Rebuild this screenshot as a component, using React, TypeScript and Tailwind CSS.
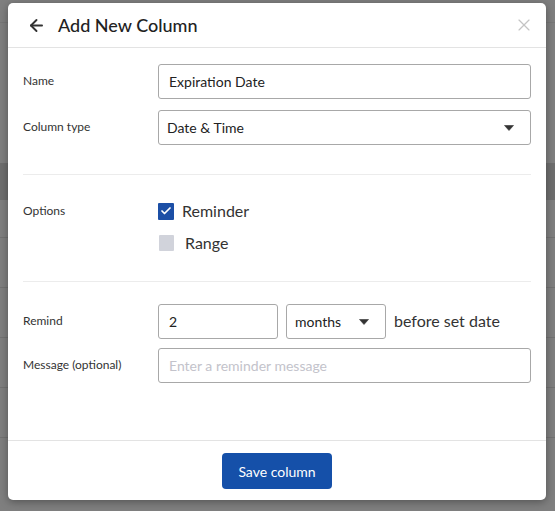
import { ArrowLeft, X, Check } from 'lucide-react';

const font = { fontFamily: 'Lato, "Open Sans", sans-serif' };

function Caret() {
  return (
    <svg width="10" height="6" viewBox="0 0 10 6" className="shrink-0">
      <path d="M0.5 0.5h9L5 5.5z" fill="#333" stroke="#333" strokeLinejoin="round" strokeWidth="0.6" />
    </svg>
  );
}

function Row({ label, children }: { label: string; children: React.ReactNode }) {
  return (
    <div className="flex items-center">
      <div className="w-[135px] shrink-0 pb-[2px] text-[12px] text-[#333]">{label}</div>
      {children}
    </div>
  );
}

export default function App() {
  return (
    <div className="relative h-[511px] w-[555px] overflow-hidden bg-[#7f7f7f]" style={font}>
      {/* dimmed page behind the dialog */}
      <div className="flex flex-col">
        <div className="h-[23px] border-b border-[#777]" />
        <div className="h-[140px]" />
        <div className="h-[37px] bg-[#6e6e6e]" />
        <div className="h-[38px] border-b border-[#727272]" />
        <div className="h-[50px] border-b border-[#727272]" />
        <div className="h-[50px] border-b border-[#727272]" />
        <div className="h-[50px] border-b border-[#727272]" />
        <div className="h-[50px] border-b border-[#727272]" />
      </div>

      <div className="absolute left-[8px] top-[3px] flex h-[497px] w-[538px] flex-col rounded-[5px] bg-white shadow-[0_2px_8px_rgba(0,0,0,0.35)]">
        <div className="flex h-[45px] shrink-0 items-center border-b border-[#e3e3e3] pl-[19px] pr-[12px]">
          <ArrowLeft size={19} strokeWidth={2.4} color="#333" />
          <h1 className="ml-[12px] text-[18px] font-medium text-[#222]">Add New Column</h1>
          <X size={20} strokeWidth={1.4} color="#c4c4c4" className="ml-auto" />
        </div>

        <div className="flex flex-1 flex-col px-[15px] pt-[16px]">
          <div className="flex flex-col gap-[11px]">
            <Row label="Name">
              <div className="flex h-[35px] flex-1 items-center rounded-[3px] border border-[#a8a8a8] px-[10px] text-[14px] text-[#222]">
                Expiration Date
              </div>
            </Row>
            <Row label="Column type">
              <div className="flex h-[35px] flex-1 items-center justify-between rounded-[3px] border border-[#a8a8a8] pl-[8px] pr-[16px] text-[14px] text-[#222]">
                <span>Date &amp; Time</span>
                <Caret />
              </div>
            </Row>
          </div>

          <div className="mt-[29px] h-px w-[508px] bg-[#ececec]" />

          <div className="flex pt-[26px] pb-[28px]">
            <div className="flex h-[20px] w-[135px] shrink-0 items-center text-[12px] text-[#333]">Options</div>
            <div className="flex flex-col gap-[12px]">
              <div className="flex h-[20px] items-center">
                <span className="flex h-[17px] w-[16px] items-center justify-center rounded-[1px] bg-[#1c4fa6]">
                  <Check size={12} strokeWidth={3.5} color="#fff" />
                </span>
                <span className="ml-[8px] text-[16px] text-[#333]">Reminder</span>
              </div>
              <div className="flex h-[20px] items-center pl-[1px]">
                <span className="h-[16px] w-[15px] rounded-[1px] bg-[#d1d3db]" />
                <span className="ml-[11px] text-[16px] text-[#333]">Range</span>
              </div>
            </div>
          </div>

          <div className="h-px w-[508px] bg-[#ececec]" />

          <div className="flex flex-col gap-[9px] pt-[22px]">
            <Row label="Remind">
              <div className="flex h-[35px] w-[120px] items-center rounded-[3px] border border-[#a8a8a8] px-[10px] text-[14px] text-[#222]">
                2
              </div>
              <div className="ml-[8px] flex h-[35px] w-[100px] items-center justify-between rounded-[3px] border border-[#a8a8a8] pl-[8px] pr-[16px] text-[14px] text-[#222]">
                <span>months</span>
                <Caret />
              </div>
              <span className="ml-[8px] pb-[2px] text-[16px] text-[#333]">before set date</span>
            </Row>
            <Row label="Message (optional)">
              <div className="flex h-[35px] flex-1 items-center rounded-[3px] border border-[#a8a8a8] px-[10px] text-[14px] text-[#c3c3cb]">
                Enter a reminder message
              </div>
            </Row>
          </div>
        </div>

        <div className="flex h-[60px] shrink-0 items-start justify-center border-t border-[#e3e3e3] pt-[12px]">
          <button className="flex h-[36px] w-[110px] items-center justify-center rounded-[4px] bg-[#1550a9] text-[14px] text-white">
            Save column
          </button>
        </div>
      </div>
    </div>
  );
}
